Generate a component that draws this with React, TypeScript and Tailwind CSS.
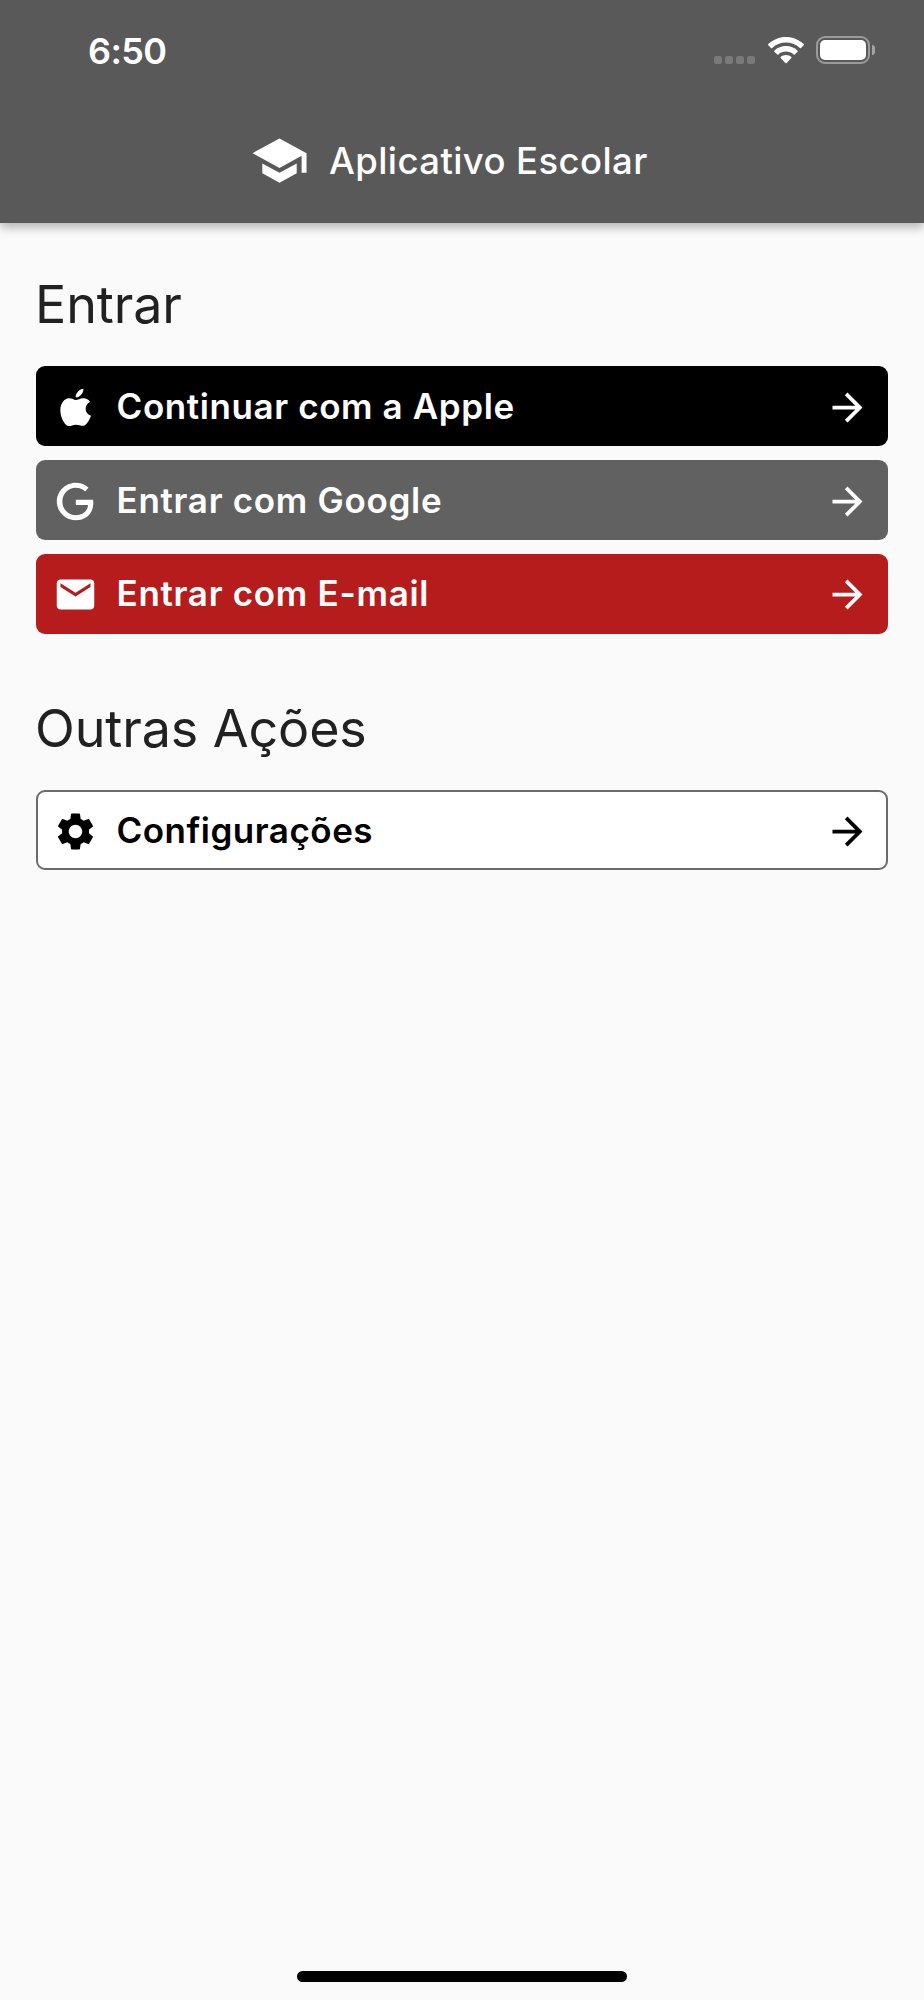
import { clsx } from 'clsx';
import type { ReactNode } from 'react';
import { MdArrowForward, MdEmail, MdSchool, MdSettings } from 'react-icons/md';

interface ActionButtonProps {
  label: string;
  icon: ReactNode;
  className: string;
  labelClassName: string;
}

function AppleIcon() {
  return (
    <svg viewBox="9 15 135 135" fill="currentColor" className="size-[45px]">
      <path d="M77 60C85 60 92 53 103 55C111 56 117 60 120 66C111 71 107 78 107 86C107 96 114 104 123 107C119 119 111 133 102 137C94 139 88 134 78 134C68 134 62 139 54 138C43 134 31 112 31 91C31 70 43 56 57 55C66 55 72 60 77 60Z" />
      <path d="M77 52C75 43 87 27 100 26C102 36 90 53 77 52Z" />
    </svg>
  );
}

function GoogleIcon() {
  return (
    <svg viewBox="0 0 24 24" fill="currentColor" className="size-[45px]">
      <path d="M21.35 11.1H12.18V13.83H18.69C18.36 17.64 15.19 19.27 12.19 19.27C8.36 19.27 5 16.25 5 12C5 7.9 8.2 4.73 12.2 4.73C15.29 4.73 17.1 6.7 17.1 6.7L19 4.72C19 4.72 16.56 2 12.1 2C6.42 2 2.03 6.8 2.03 12C2.03 17.05 6.16 22 12.25 22C17.6 22 21.5 18.33 21.5 12.91C21.5 11.76 21.35 11.1 21.35 11.1Z" />
    </svg>
  );
}

function StatusBar() {
  return (
    <div className="flex h-[98px] items-center justify-between pt-[2px] pr-[49px] pl-[88px]">
      <span className="mt-px text-[36px] leading-none font-semibold tracking-[-0.6px]">6:50</span>
      <div className="flex items-center">
        <div className="mt-[19px] mr-[13px] flex gap-[3px] opacity-20">
          <span className="size-2 rounded-[2.5px] bg-white" />
          <span className="size-2 rounded-[2.5px] bg-white" />
          <span className="size-2 rounded-[2.5px] bg-white" />
          <span className="size-2 rounded-[2.5px] bg-white" />
        </div>
        <svg viewBox="0 0 36 27" fill="currentColor" className="mr-[12px] h-[27px] w-[36px]">
          <path d="M18 0C24.9 0 31.1 2.7 35.7 7.1C36.1 7.5 36.1 8 35.7 8.3L33 11C32.7 11.3 32.2 11.3 31.8 11C28.2 7.6 23.3 5.6 18 5.6C12.7 5.6 7.8 7.6 4.2 11C3.8 11.3 3.3 11.3 3 11L.3 8.3C-.1 8-.1 7.5.3 7.1C4.9 2.7 11.1 0 18 0Z" />
          <path d="M18 9.1C22.5 9.1 26.5 10.8 29.5 13.5C29.9 13.9 29.9 14.4 29.6 14.7L26.8 17.4C26.5 17.7 26 17.7 25.6 17.4C23.6 15.6 20.9 14.6 18 14.6C15.1 14.6 12.4 15.6 10.4 17.4C10 17.7 9.5 17.7 9.2 17.4L6.4 14.7C6.1 14.4 6.1 13.9 6.5 13.5C9.5 10.8 13.5 9.1 18 9.1Z" />
          <path d="M18 18.1C20 18.1 21.9 18.8 23.3 20C23.7 20.3 23.7 20.8 23.4 21.1L18.6 25.9C18.2 26.3 17.8 26.3 17.4 25.9L12.6 21.1C12.3 20.8 12.3 20.3 12.7 20C14.1 18.8 16 18.1 18 18.1Z" />
        </svg>
        <div className="flex items-center gap-[2px]">
          <div className="h-[28px] w-[54px] rounded-[9px] border-2 border-white/40 p-[2px]">
            <div className="size-full rounded-[5px] bg-white" />
          </div>
          <span className="h-[10px] w-[3px] rounded-r-full bg-white/45" />
        </div>
      </div>
    </div>
  );
}

function ActionButton({ label, icon, className, labelClassName }: ActionButtonProps) {
  return (
    <button className={clsx('flex h-[80px] w-full items-center rounded-[9px] text-left', className)}>
      <span className="mt-[2px]">{icon}</span>
      <span className={clsx('ml-[18.5px] flex-1 text-[35px] leading-none', labelClassName)}>{label}</span>
      <MdArrowForward className="mt-[2px] size-[45px]" />
    </button>
  );
}

export default function App() {
  return (
    <div className="flex h-[2000px] w-[924px] flex-col bg-[#fafafa] font-['Inter',sans-serif] text-[#212121]">
      <header className="h-[223px] bg-[#595959] text-white shadow-[0_4px_10px_rgba(0,0,0,0.3)]">
        <StatusBar />
        <div className="flex h-[125px] items-center pl-[250px]">
          <MdSchool className="size-[59px]" />
          <h1 className="mt-[2px] ml-[20px] text-[36.5px] leading-none font-medium tracking-[0.4px]">
            Aplicativo Escolar
          </h1>
        </div>
      </header>

      <main className="flex flex-1 flex-col px-[36px] pt-[51px]">
        <h2 className="-ml-px h-[92px] text-[52px] leading-[62px] tracking-[-0.1px]">Entrar</h2>
        <div className="flex flex-col">
          <ActionButton
            label="Continuar com a Apple"
            icon={<AppleIcon />}
            className="bg-black pr-[18px] pl-[17px] text-white"
            labelClassName="font-semibold tracking-[0.6px]"
          />
          <ActionButton
            label="Entrar com Google"
            icon={<GoogleIcon />}
            className="mt-[14px] bg-[#616161] pr-[18px] pl-[17px] text-white"
            labelClassName="font-semibold tracking-[0.7px]"
          />
          <ActionButton
            label="Entrar com E-mail"
            icon={<MdEmail className="size-[45px]" />}
            className="mt-[13.75px] bg-[#b71c1c] pr-[18px] pl-[17px] text-white"
            labelClassName="font-semibold tracking-[0.7px]"
          />
        </div>

        <h2 className="mt-[64.25px] -ml-px h-[92px] text-[52px] leading-[62px] tracking-[-0.1px]">Outras Ações</h2>
        <ActionButton
          label="Configurações"
          icon={<MdSettings className="size-[45px]" />}
          className="border-2 border-[#6b6b6b] bg-white pr-[16px] pl-[15px] text-black"
          labelClassName="font-semibold tracking-[0.5px]"
        />
      </main>

      <div className="mx-auto mb-[18px] h-[11px] w-[330px] rounded-full bg-black" />
    </div>
  );
}
